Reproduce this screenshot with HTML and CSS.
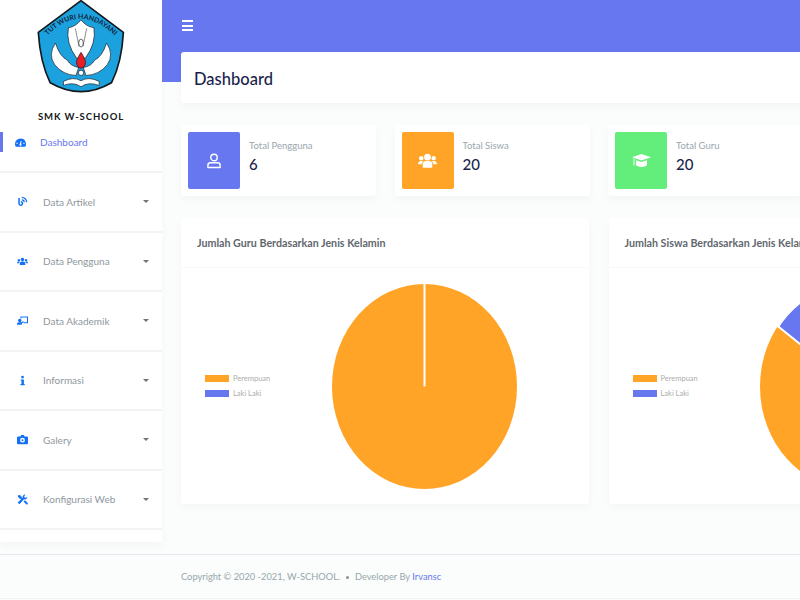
FILE: index.html
```html
<!DOCTYPE html>
<html lang="id">
<head>
    <meta charset="UTF-8">
    <meta name="viewport" content="width=device-width, initial-scale=1.0">
    <title>Dashboard - SMK W-School</title>
    <link rel="stylesheet" href="styles.css">
</head>
<body>
    <div class="layout">
        <aside class="sidebar">
            <div class="brand">
                <svg class="logo" viewBox="111 0 264 290" width="88" height="96">
                    <path d="M243 2 L371 98 Q366 190 335 250 Q243 304 150 250 Q120 190 114 98 Z" fill="#1ba1de" stroke="#14181c" stroke-width="5" stroke-linejoin="round"/>
                    <path id="logoArc" d="M132 118 Q240 -4 354 118" fill="none"/>
                    <text class="logo-text"><textPath href="#logoArc" startOffset="50%" text-anchor="middle">TUT WURI HANDAYANI</textPath></text>
                    <path d="M205 84 Q228 80 243 60 Q258 80 282 84 Q290 130 256 176 L230 176 Q196 130 205 84 Z" fill="#fff" stroke="#14181c" stroke-width="2"/>
                    <path d="M226 86 L237 140 M260 86 L249 140" stroke="#14181c" stroke-width="1.500" fill="none"/>
                    <path d="M166 130 Q142 165 164 196 Q188 226 228 228 L236 204 Q212 200 202 182 Q178 170 166 130 Z" fill="#fff" stroke="#14181c" stroke-width="2"/>
                    <path d="M320 130 Q344 165 322 196 Q298 226 258 228 L250 204 Q274 200 284 182 Q308 170 320 130 Z" fill="#fff" stroke="#14181c" stroke-width="2"/>
                    <ellipse cx="243" cy="130" rx="7" ry="12" fill="#fff" stroke="#14181c" stroke-width="2"/>
                    <path d="M243 158 Q260 184 256 194 Q252 206 243 206 Q234 206 230 194 Q226 184 243 158 Z" fill="#ee1c25" stroke="#14181c" stroke-width="2"/>
                    <circle cx="243" cy="220" r="8" fill="#fff" stroke="#14181c" stroke-width="2"/>
                    <path d="M190 246 Q220 230 243 244 Q266 230 298 246 L298 258 Q266 246 243 262 Q220 246 190 258 Z" fill="#fff" stroke="#14181c" stroke-width="2"/>
                </svg>
                <div class="brand-name">SMK W-SCHOOL</div>
            </div>

            <a class="menu-active">
                <svg class="menu-icon" viewBox="0 0 16 16"><path d="M8 2a8 8 0 0 0-8 8c0 1.500.4 2.900 1.100 4h13.800A8 8 0 0 0 8 2zm1 8.300a1.500 1.500 0 1 1-2 0L8.500 5.500l1 .3zM3 10a1 1 0 1 1 0-2 1 1 0 0 1 0 2zm10 0a1 1 0 1 1 0-2 1 1 0 0 1 0 2z" fill="#1370f5"/></svg>
                <span>Dashboard</span>
            </a>

            <ul class="menu">
                <li>
                    <svg class="menu-icon" viewBox="0 0 16 16"><path d="M3 3v8a2.500 2.500 0 1 0 2.500-2.500" fill="none" stroke="#1370f5" stroke-width="2.200"/><path d="M7 2a7 7 0 0 1 7 7M7 5.500A3.500 3.500 0 0 1 10.500 9" fill="none" stroke="#1370f5" stroke-width="1.800"/></svg>
                    <span>Data Artikel</span><i class="caret"></i>
                </li>
                <li>
                    <svg class="menu-icon" viewBox="0 0 16 16"><circle cx="8" cy="5" r="2.500" fill="#1370f5"/><circle cx="2.800" cy="6" r="1.700" fill="#1370f5"/><circle cx="13.200" cy="6" r="1.700" fill="#1370f5"/><path d="M4 13v-2a3 3 0 0 1 3-3h2a3 3 0 0 1 3 3v2zM0 10.500C0 9 1 8 2.500 8H4L3 10.500zM16 10.500C16 9 15 8 13.500 8H12l1 2.500z" fill="#1370f5"/></svg>
                    <span>Data Pengguna</span><i class="caret"></i>
                </li>
                <li>
                    <svg class="menu-icon" viewBox="0 0 16 16"><path d="M5 2h11v10H9.500v-1.500h5V3.500h-8V5H5z" fill="#1370f5"/><circle cx="4" cy="8" r="2.500" fill="#1370f5"/><path d="M0 14v-1a2.500 2.500 0 0 1 2.500-2.500h3L9 9l1 1-3 2.500V14z" fill="#1370f5"/></svg>
                    <span>Data Akademik</span><i class="caret"></i>
                </li>
                <li>
                    <svg class="menu-icon" viewBox="0 0 16 16"><circle cx="8" cy="3" r="2" fill="#1370f5"/><path d="M5.500 6.500H10V13h1.200v2H5v-2h1.500V8.500h-1z" fill="#1370f5"/></svg>
                    <span>Informasi</span><i class="caret"></i>
                </li>
                <li>
                    <svg class="menu-icon" viewBox="0 0 16 16"><path d="M1.500 3.500H5L6 1.500h4l1 2h3.500A1.500 1.500 0 0 1 16 5v8.500a1.500 1.500 0 0 1-1.500 1.500h-13A1.500 1.500 0 0 1 0 13.500V5a1.500 1.500 0 0 1 1.500-1.500zM8 12.500a3.500 3.500 0 1 0 0-7 3.500 3.500 0 0 0 0 7zm0-2a1.500 1.500 0 1 1 0-3 1.500 1.500 0 0 1 0 3z" fill="#1370f5"/></svg>
                    <span>Galery</span><i class="caret"></i>
                </li>
                <li>
                    <svg class="menu-icon" viewBox="0 0 16 16"><path d="M1 3l2-2 3 2 1 2 2 2-2 2-2-2-2-1zM15 4.500a3.500 3.500 0 0 1-4.800 3.300L3.500 15 1 12.500l7.300-6.900A3.500 3.500 0 0 1 12.500 1L10.500 3l.5 2 2 .5zM9.500 11l2-2 3.800 3.800a1.400 1.400 0 0 1-2 2z" fill="#1370f5"/></svg>
                    <span>Konfigurasi Web</span><i class="caret"></i>
                </li>
            </ul>
        </aside>

        <main class="main">
            <div class="topbar">
                <div class="burger"><span></span><span></span><span></span></div>
            </div>

            <div class="content">
                <section class="page-title">
                    <h1>Dashboard</h1>
                </section>

                <section class="stats">
                    <div class="stat">
                        <div class="stat-icon bg-blue">
                            <svg viewBox="0 0 16 18" width="14" height="16"><circle cx="8" cy="5" r="3.700" fill="none" stroke="#fff" stroke-width="1.600"/><path d="M1 16.500v-2.500a3 3 0 0 1 3-3h8a3 3 0 0 1 3 3v2.500z" fill="none" stroke="#fff" stroke-width="1.600" stroke-linejoin="round"/></svg>
                        </div>
                        <div>
                            <div class="stat-label">Total Pengguna</div>
                            <div class="stat-value">6</div>
                        </div>
                    </div>
                    <div class="stat">
                        <div class="stat-icon bg-orange">
                            <svg viewBox="0 0 20 15" width="19" height="15"><circle cx="10" cy="4" r="3.500" fill="#fff"/><circle cx="3.500" cy="5" r="2.300" fill="#fff"/><circle cx="16.500" cy="5" r="2.300" fill="#fff"/><path d="M5 15v-3.500A3.500 3.500 0 0 1 8.500 8h3a3.500 3.500 0 0 1 3.500 3.500V15zM0 11.500C0 9.500 1.200 8 3 8h2.200L3.800 11.500zM20 11.500C20 9.500 18.800 8 17 8h-2.200l1.400 3.500z" fill="#fff"/></svg>
                        </div>
                        <div>
                            <div class="stat-label">Total Siswa</div>
                            <div class="stat-value">20</div>
                        </div>
                    </div>
                    <div class="stat">
                        <div class="stat-icon bg-green">
                            <svg viewBox="0 0 19 13" width="19" height="13"><path d="M9.500 0L19 3.300 9.500 6.600 0 3.300z" fill="#fff"/><path d="M4 6.200l5.500 1.900L15 6.200v4.300c0 1.400-2.500 2.500-5.500 2.500S4 11.900 4 10.500zM1.500 4.500h1v7h-1z" fill="#fff"/></svg>
                        </div>
                        <div>
                            <div class="stat-label">Total Guru</div>
                            <div class="stat-value">20</div>
                        </div>
                    </div>
                </section>

                <section class="charts">
                    <div class="card">
                        <div class="card-header">Jumlah Guru Berdasarkan Jenis Kelamin</div>
                        <div class="card-body">
                            <ul class="legend">
                                <li><i class="swatch bg-orange"></i>Perempuan</li>
                                <li><i class="swatch bg-blue"></i>Laki Laki</li>
                            </ul>
                            <svg class="pie" viewBox="0 0 185 205" width="185" height="205">
                                <ellipse cx="92.500" cy="102.500" rx="92.500" ry="102.500" fill="#ffa426"/>
                                <path d="M92.500 102.500V0" stroke="#fff" stroke-width="2"/>
                            </svg>
                        </div>
                    </div>
                    <div class="card">
                        <div class="card-header">Jumlah Siswa Berdasarkan Jenis Kelamin</div>
                        <div class="card-body">
                            <ul class="legend">
                                <li><i class="swatch bg-orange"></i>Perempuan</li>
                                <li><i class="swatch bg-blue"></i>Laki Laki</li>
                            </ul>
                            <svg class="pie" viewBox="0 0 185 205" width="185" height="205">
                                <ellipse cx="92.500" cy="102.500" rx="92.500" ry="102.500" fill="#ffa426"/>
                                <path d="M92.500 102.500L18.300 42.500A92.500 102.500 0 0 1 92.500 0Z" fill="#6777ef" stroke="#fff" stroke-width="2"/>
                            </svg>
                        </div>
                    </div>
                </section>
            </div>
        </main>
    </div>

    <footer class="footer">
        Copyright &copy; 2020 -2021, W-SCHOOL. <span class="dot"></span> Developer By <a>Irvansc</a>
    </footer>
</body>
</html>
```

FILE: styles.css
```css
html, body {
    height: 100%;
}
body {
    font-family: Lato, "Noto Sans", sans-serif;
    margin: 0;
    width: 800px;
    height: 600px;
    overflow: hidden;
    background-color: #fafdfb;
}
ul {
    list-style: none;
    margin: 0;
    padding: 0;
}
.layout {
    display: flex;
    height: 554px;
}

/* sidebar */
.sidebar {
    width: 162px;
    height: 542px;
    flex-shrink: 0;
    background-color: white;
    box-shadow: 0 4px 8px rgba(0, 0, 0, 0.03);
}
.brand {
    display: flex;
    flex-direction: column;
    align-items: center;
}
.logo {
    display: block;
}
.logo-text {
    font-size: 21px;
    font-weight: 700;
    fill: #14243a;
}
.brand-name {
    margin-top: 14px;
    font-size: 9.500px;
    font-weight: 700;
    line-height: 13px;
    letter-spacing: 0.9px;
    color: #14181c;
}
.menu-active {
    display: flex;
    align-items: center;
    height: 20px;
    margin-top: 9px;
    padding-left: 12px;
    border-left: 3px solid #6777ef;
    font-size: 10px;
    color: #6777ef;
}
.menu-active span {
    margin-left: 14px;
}
.menu {
    margin-top: 19px;
    border-top: 2px solid #f2f3f4;
}
.menu li {
    display: flex;
    align-items: center;
    height: 57.500px;
    padding-left: 17px;
    border-bottom: 2px solid #f2f3f4;
    font-size: 10px;
    color: #8f979e;
}
.menu li span {
    margin-left: 15px;
}
.menu-icon {
    width: 11px;
    height: 11px;
    flex-shrink: 0;
}
.caret {
    margin-left: auto;
    margin-right: 13px;
    border-top: 3px solid #6c757d;
    border-left: 3px solid transparent;
    border-right: 3px solid transparent;
}

/* header and content */
.main {
    flex: 1;
    min-width: 0;
}
.topbar {
    height: 82px;
    background-color: #6777ef;
}
.burger {
    display: flex;
    flex-direction: column;
    gap: 2.500px;
    width: 11px;
    padding: 20px 0 0 20px;
}
.burger span {
    height: 2px;
    background-color: white;
}
.content {
    margin-top: -30px;
    padding-left: 19px;
}
.page-title {
    width: 800px;
    height: 51px;
    display: flex;
    align-items: center;
    padding-left: 13px;
    padding-top: 2px;
    box-sizing: border-box;
    background-color: white;
    border-radius: 3px;
    box-shadow: 0 4px 8px rgba(0, 0, 0, 0.03);
}
h1 {
    margin: 0;
    font-size: 16.500px;
    font-weight: 500;
    color: #1b1f4b;
}
.stats {
    display: flex;
    gap: 18.500px;
    margin-top: 22px;
}
.stat {
    display: flex;
    flex-shrink: 0;
    width: 195px;
    height: 71px;
    box-sizing: border-box;
    padding: 7px;
    gap: 9px;
    background-color: white;
    border-radius: 3px;
    box-shadow: 0 4px 8px rgba(0, 0, 0, 0.03);
}
.stat-icon {
    display: flex;
    align-items: center;
    justify-content: center;
    width: 52px;
    height: 57px;
    border-radius: 2px;
}
.bg-blue {
    background-color: #6777ef;
}
.bg-orange {
    background-color: #ffa426;
}
.bg-green {
    background-color: #63ed7a;
}
.stat-label {
    margin-top: 7px;
    font-size: 9.500px;
    line-height: 14px;
    color: #98a6ad;
}
.stat-value {
    margin-top: 1px;
    font-size: 15px;
    font-weight: 500;
    line-height: 20px;
    color: #1b1f4b;
}
.charts {
    display: flex;
    gap: 19.500px;
    margin-top: 22px;
}
.card {
    flex-shrink: 0;
    width: 408px;
    height: 286px;
    background-color: white;
    border-radius: 3px;
    box-shadow: 0 4px 8px rgba(0, 0, 0, 0.03);
}
.card-header {
    height: 50px;
    box-sizing: border-box;
    padding: 17px 0 0 16px;
    border-bottom: 1px solid #f9f9f9;
    font-size: 10.700px;
    font-weight: 700;
    line-height: 16px;
    color: #5f676e;
}
.card-body {
    display: flex;
    align-items: center;
    height: 236px;
}
.legend {
    width: 127px;
    padding-left: 24px;
    font-size: 7.500px;
    color: #adadad;
}
.legend li {
    display: flex;
    align-items: center;
    height: 15px;
}
.swatch {
    width: 24px;
    height: 7px;
    margin-right: 4px;
}
.pie {
    display: block;
    flex-shrink: 0;
}

/* footer */
.footer {
    height: 45px;
    box-sizing: border-box;
    padding: 15px 0 0 181px;
    border-top: 1px solid #e3eaef;
    border-bottom: 1px solid #f0f2f3;
    font-size: 9.300px;
    line-height: 14px;
    color: #98a6ad;
}
.footer a {
    color: #6777ef;
}
.dot {
    display: inline-block;
    width: 3px;
    height: 3px;
    margin: 0 3.500px;
    border-radius: 50%;
    vertical-align: middle;
    background-color: #8a9299;
}
```
